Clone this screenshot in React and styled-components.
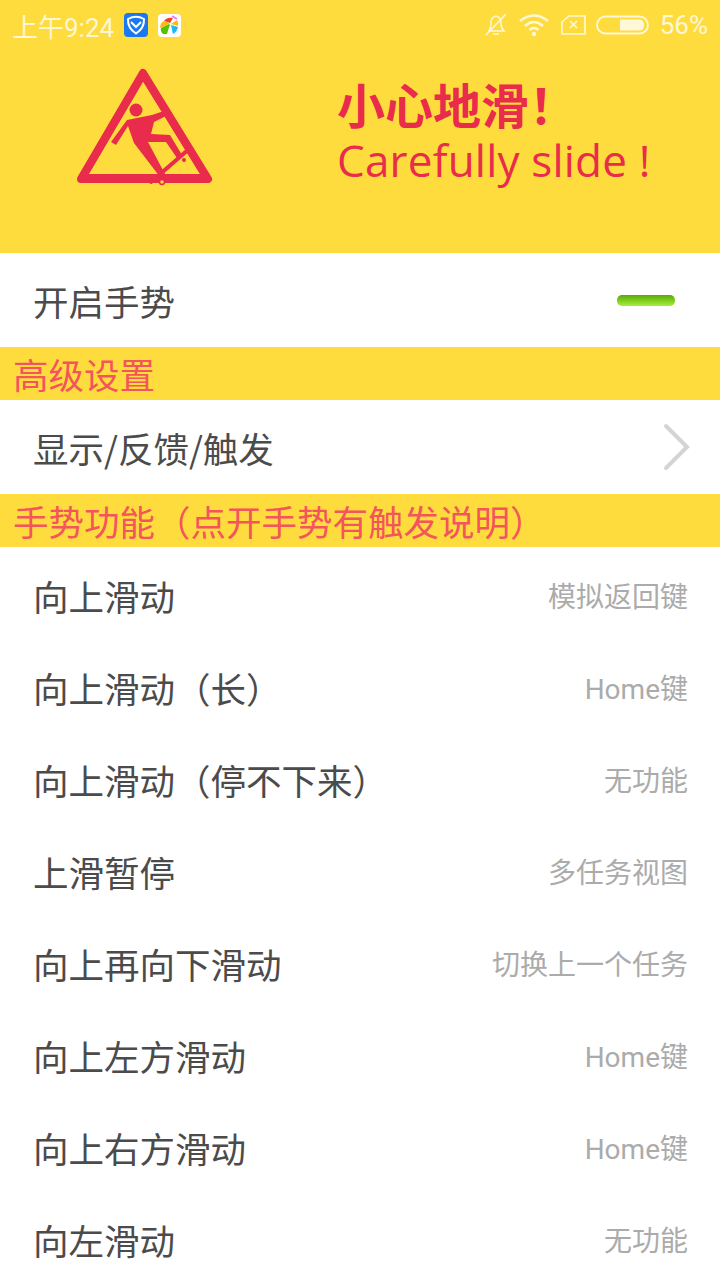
import React from 'react';
import styled, {createGlobalStyle} from 'styled-components';

const YELLOW = '#fedc3d';
const RED = '#e92b4c';

const GlobalStyle = createGlobalStyle`
  html, body {
    margin: 0;
    padding: 0;
    background: #fff;
    font-family: "Noto Sans CJK SC", "Noto Sans", sans-serif;
  }
`

const Page = styled.div`
  width: 720px;
  height: 1280px;
  overflow: hidden;
  background: #fff;
`

const Banner = styled.header`
  height: 253px;
  background: ${YELLOW};
`

const StatusBar = styled.div`
  height: 50px;
  padding: 0 12px 0 12px;
  display: flex;
  align-items: center;
  justify-content: space-between;
  color: rgba(255, 255, 255, 0.78);
  font-size: 26px;
  font-family: Roboto, "Noto Sans CJK SC", sans-serif;
`

const StatusGroup = styled.div`
  display: flex;
  align-items: center;
  gap: ${props => props.$gap}px;
`

const Hero = styled.div`
  display: flex;
  align-items: flex-start;
  padding: 17px 0 0 74px;
`

const HeroText = styled.div`
  margin-left: 123px;
  margin-top: 8px;
  color: ${RED};
`

const HeroTitle = styled.div`
  font-size: 48px;
  font-weight: 700;
  line-height: 56px;
`

const HeroSub = styled.div`
  font-family: "Open Sans", sans-serif;
  font-size: 44px;
  line-height: 58px;
  letter-spacing: 0.2px;
`

const Row = styled.div`
  height: ${props => props.$height}px;
  padding: 0 32px 0 33px;
  display: flex;
  align-items: center;
  justify-content: space-between;
  background: #fff;
`

const Label = styled.span`
  font-size: 35.5px;
  color: #4b4b4b;
`

const Value = styled.span`
  font-size: 28px;
  color: #ababab;
  font-family: Roboto, "Noto Sans CJK SC", sans-serif;
`

const Section = styled.div`
  height: 53px;
  padding-left: 13px;
  background: ${YELLOW};
  color: #f4545c;
  font-size: 35.5px;
  line-height: 53px;
  white-space: nowrap;
`

const Toggle = styled.div`
  width: 58px;
  height: 11px;
  margin-right: 13px;
  border-radius: 5px;
  background: linear-gradient(#58aa03, #a6ee3f);
`

const Chevron = styled.svg`
  margin-right: -3px;
`

const GestureList = styled.div`
  padding-top: 2px;
`

const gestures = [
  ['向上滑动', '模拟返回键'],
  ['向上滑动（长）', 'Home键'],
  ['向上滑动（停不下来）', '无功能'],
  ['上滑暂停', '多任务视图'],
  ['向上再向下滑动', '切换上一个任务'],
  ['向上左方滑动', 'Home键'],
  ['向上右方滑动', 'Home键'],
  ['向左滑动', '无功能'],
];

// QQ security shield badge
const ShieldIcon = () => (
  <svg width="24" height="24" viewBox="0 0 24 24">
    <rect width="24" height="24" rx="4" fill="#1a78f0" />
    <path d="M4 6 Q12 1.500 20 6 Q20.500 15 12 20.500 Q3.500 15 4 6Z" fill="none" stroke="#fff" strokeWidth="2" />
    <path d="M7 9 L12 14 L17 9" fill="none" stroke="#fff" strokeWidth="2" />
  </svg>
);

// colourful app-store badge
const StoreIcon = () => (
  <svg width="23" height="23" viewBox="0 0 23 23">
    <rect width="23" height="23" rx="4" fill="#fff" />
    <path d="M6 7 Q9 3 15 4 L12 9Z" fill="#f0421c" />
    <path d="M2 14 Q2 9 6 7 L12 9 L7 12Z" fill="#fdb913" />
    <path d="M5 20 Q2 17 3 14 L11 10 L12 11 Q10 16 9 20Z" fill="#55c400" />
    <path d="M13 10 L19 6 Q21 9 20 12Z" fill="#fdb913" />
    <path d="M13 11 L20 13 Q19 18 15 20Z" fill="#1cb8f0" />
    <path d="M14 2 L19 5" stroke="#e87cf0" strokeWidth="2" />
  </svg>
);

const MuteIcon = () => (
  <svg width="24" height="26" viewBox="0 0 24 26" fill="none" stroke="rgba(255,255,255,0.78)" strokeWidth="1.600">
    <path d="M5 19 Q7 16 7 11 Q7 5 12 4 Q17 5 17 11 Q17 16 20 19Z" />
    <path d="M9 22 H15" />
    <path d="M2 23 L22 2" />
  </svg>
);

const WifiIcon = () => (
  <svg width="32" height="24" viewBox="0 0 32 24" fill="none" stroke="rgba(255,255,255,0.8)" strokeWidth="2.600">
    <path d="M2 8 Q16 -3 30 8" />
    <path d="M7 13 Q16 5 25 13" />
    <path d="M11.500 17 Q16 13 20.500 17" />
    <circle cx="16" cy="21" r="2.200" fill="rgba(255,255,255,0.8)" stroke="none" />
  </svg>
);

const SimIcon = () => (
  <svg width="26" height="22" viewBox="0 0 26 22" fill="none" stroke="rgba(255,255,255,0.78)" strokeWidth="1.600">
    <path d="M9 2 H25 V20 H2 V8Z" />
    <path d="M10 7 L17 14 M17 7 L10 14" />
  </svg>
);

const BatteryIcon = () => (
  <svg width="54" height="20" viewBox="0 0 54 20">
    <rect x="1" y="1.500" width="51" height="17" rx="8.500" fill="none" stroke="rgba(255,255,255,0.8)" strokeWidth="1.800" />
    <path d="M24 4.500 H43 Q48 4.500 48 10 Q48 15.500 43 15.500 H24Z" fill="rgba(255,255,255,0.8)" />
  </svg>
);

// warning triangle with a falling skateboarder
const WarningSign = () => (
  <svg width="140" height="120" viewBox="0 0 140 120">
    <path d="M69 7 L133 111 H8Z" fill="none" stroke={RED} strokeWidth="8" strokeLinejoin="round" />
    <path d="M69 6 L134 112 H7Z" fill="none" stroke={RED} strokeWidth="8" strokeLinejoin="round" />
    <circle cx="62" cy="43" r="6.500" fill={RED} />
    <path
      d="M53 53 L78 48 L93 43 L96 47 L80 55 L77 67 L96 68 L108 88 L103 91 L92 75 L74 75 L91 107 L86 110 L60 76 L54 59 L42 78 L37 75Z"
      fill={RED}
    />
    <path d="M77 115 L115 82" stroke={RED} strokeWidth="4" strokeLinecap="round" />
    <circle cx="110" cy="93" r="2" fill={RED} />
    <circle cx="88" cy="115" r="2.500" fill={YELLOW} stroke={RED} strokeWidth="1.500" />
  </svg>
);

class App extends React.Component {
  render() {
    return (
      <Page>
        <GlobalStyle/>
        <Banner>
          <StatusBar>
            <StatusGroup $gap={10}>
              <span>上午9:24</span>
              <ShieldIcon/>
              <StoreIcon/>
            </StatusGroup>
            <StatusGroup $gap={10}>
              <MuteIcon/>
              <WifiIcon/>
              <SimIcon/>
              <BatteryIcon/>
              <span>56%</span>
            </StatusGroup>
          </StatusBar>
          <Hero>
            <WarningSign/>
            <HeroText>
              <HeroTitle>小心地滑！</HeroTitle>
              <HeroSub>Carefully slide !</HeroSub>
            </HeroText>
          </Hero>
        </Banner>
        <Row $height={94}>
          <Label>开启手势</Label>
          <Toggle/>
        </Row>
        <Section>高级设置</Section>
        <Row $height={94}>
          <Label>显示/反馈/触发</Label>
          <Chevron width="28" height="48" viewBox="0 0 28 48" fill="none" stroke="#d4d4d4" strokeWidth="4" strokeLinecap="round">
            <path d="M3 3 L24 24 L3 45"/>
          </Chevron>
        </Row>
        <Section>手势功能（点开手势有触发说明）</Section>
        <GestureList>
          {gestures.map(([name, action]) => (
            <Row $height={92} key={name}>
              <Label>{name}</Label>
              <Value>{action}</Value>
            </Row>
          ))}
        </GestureList>
      </Page>
    );
  }
}

export default App
